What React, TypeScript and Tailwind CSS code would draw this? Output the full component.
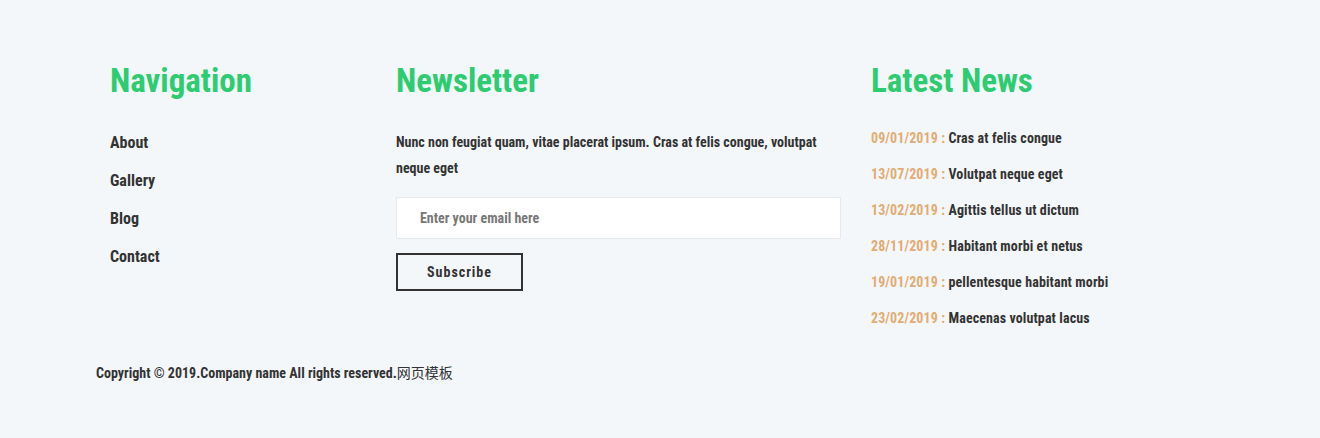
import React from "react";

const news = [
  ["09/01/2019", "Cras at felis congue"],
  ["13/07/2019", "Volutpat neque eget"],
  ["13/02/2019", "Agittis tellus ut dictum"],
  ["28/11/2019", "Habitant morbi et netus"],
  ["19/01/2019", "pellentesque habitant morbi"],
  ["23/02/2019", "Maecenas volutpat lacus"],
];

export default function App() {
  return (
    <div className="min-h-[438px] bg-[#f4f7fa] pt-[61px] text-[#333] font-['Roboto_Condensed','Noto_Sans_CJK_SC',sans-serif]">
      <div className="pl-[96px]">
        <div className="flex">
          <div className="w-[300px] pl-[14px]">
            <h2 className="text-[33px] leading-[39px] font-bold text-[#2ecc71]">Navigation</h2>
            <ul className="mt-[32px] flex flex-col gap-[16px]">
              {["About", "Gallery", "Blog", "Contact"].map((l) => (
                <li key={l} className="text-[16px] leading-[22px] font-bold">
                  <a href="#">{l}</a>
                </li>
              ))}
            </ul>
          </div>
          <div className="w-[475px]">
            <h2 className="text-[33px] leading-[39px] font-bold text-[#2ecc71]">Newsletter</h2>
            <p className="mt-[29px] w-[445px] text-[14px] leading-[26px] font-bold">
              Nunc non feugiat quam, vitae placerat ipsum. Cras at felis congue, volutpat neque eget
            </p>
            <div className="mt-[16px] h-[42px] w-[445px] border border-[#e6eaee] bg-white flex items-center pl-[23px] text-[14px] font-bold text-[#777]">
              Enter your email here
            </div>
            <button className="mt-[14px] h-[38px] w-[127px] border-2 border-[#333] text-[14px] font-bold tracking-[1px] text-[#333]">
              Subscribe
            </button>
          </div>
          <div>
            <h2 className="text-[33px] leading-[39px] font-bold text-[#2ecc71]">Latest News</h2>
            <ul className="mt-[28px] flex flex-col gap-[16px]">
              {news.map(([d, t]) => (
                <li key={d + t} className="text-[14px] leading-[20px] font-bold tracking-[0.1px]">
                  <span className="text-[#e2ac72]">{d} : </span>
                  {t}
                </li>
              ))}
            </ul>
          </div>
        </div>
        <p className="mt-[35px] text-[14px] leading-[20px] font-bold">
          Copyright © 2019.Company name All rights reserved.<span className="font-normal">网页模板</span>
        </p>
      </div>
    </div>
  );
}
